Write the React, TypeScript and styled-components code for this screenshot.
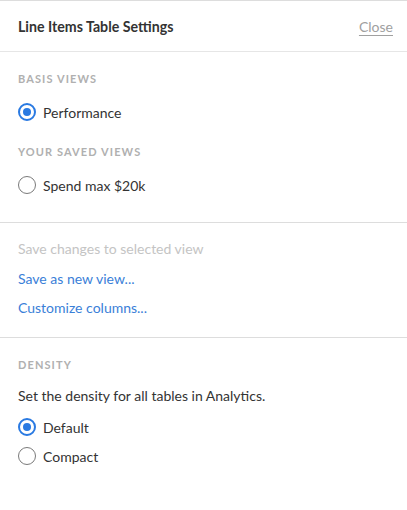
import { createGlobalStyle, styled } from 'styled-components';

const GlobalStyle = createGlobalStyle`
  body {
    margin: 0;
    background: #ffffff;
    font-family: Lato, "Open Sans", sans-serif;
    color: #333333;
  }
`;

interface RadioProps {
  label: string;
  checked?: boolean;
}

const Radio = ({ label, checked }: RadioProps) => (
  <RadioRow>
    <RadioCircle $checked={checked} />
    <span>{label}</span>
  </RadioRow>
);

export default function App() {
  return (
    <>
      <GlobalStyle />
      <Panel>
        <Header>
          <Title>Line Items Table Settings</Title>
          <CloseLink>Close</CloseLink>
        </Header>

        <Section>
          <SectionLabel>Basis Views</SectionLabel>
          <Radio label="Performance" checked />
          <SectionLabel $spaced>Your Saved Views</SectionLabel>
          <Radio label="Spend max $20k" />
        </Section>

        <LinkSection>
          <Action $disabled>Save changes to selected view</Action>
          <Action>Save as new view...</Action>
          <Action>Customize columns...</Action>
        </LinkSection>

        <Section $last>
          <SectionLabel>Density</SectionLabel>
          <Description>Set the density for all tables in Analytics.</Description>
          <RadioList>
            <Radio label="Default" checked />
            <Radio label="Compact" />
          </RadioList>
        </Section>
      </Panel>
    </>
  );
}

const Panel = styled.div`
  width: 407px;
  min-height: 510px;
  box-sizing: border-box;
  border-top: 1px solid #dddddd;
  background: #ffffff;
`;

const Header = styled.div`
  height: 50px;
  display: flex;
  align-items: center;
  justify-content: space-between;
  padding: 0 14px 0 18px;
  border-bottom: 1px solid #e6e6e6;
`;

const Title = styled.h2`
  margin: 0;
  font-size: 14.2px;
  font-weight: 700;
  color: #333333;
`;

const CloseLink = styled.a`
  font-size: 14px;
  color: #a0a0a0;
  text-decoration: underline;
  text-underline-offset: 3px;
  cursor: pointer;
`;

const Section = styled.div<{ $last?: boolean }>`
  padding: 18px 18px ${({ $last }) => ($last ? '0' : '25px')};
  border-bottom: ${({ $last }) => ($last ? 'none' : '1px solid #dddddd')};
  display: flex;
  flex-direction: column;
`;

const SectionLabel = styled.div<{ $spaced?: boolean }>`
  font-size: 11px;
  line-height: 18px;
  font-weight: 700;
  letter-spacing: 1.1px;
  text-transform: uppercase;
  color: #b0b0b0;
  margin-top: ${({ $spaced }) => ($spaced ? '19px' : '0')};
  margin-bottom: 12px;
`;

const RadioRow = styled.label`
  display: flex;
  align-items: center;
  gap: 7px;
  height: 24px;
  font-size: 14px;
  color: #333333;
  cursor: pointer;
`;

const RadioCircle = styled.span<{ $checked?: boolean }>`
  width: 18px;
  height: 18px;
  box-sizing: border-box;
  border-radius: 50%;
  flex-shrink: 0;
  border: ${({ $checked }) =>
    $checked ? '2px solid #2a7ae2' : '1.5px solid #7a7a7a'};
  display: flex;
  align-items: center;
  justify-content: center;
  &::after {
    content: '';
    display: ${({ $checked }) => ($checked ? 'block' : 'none')};
    width: 8px;
    height: 8px;
    border-radius: 50%;
    background: #2a7ae2;
  }
`;

const LinkSection = styled.div`
  padding: 16px 18px 19px;
  border-bottom: 1px solid #dddddd;
  display: flex;
  flex-direction: column;
  gap: 9.5px;
`;

const Action = styled.a<{ $disabled?: boolean }>`
  font-size: 14px;
  line-height: 20px;
  color: ${({ $disabled }) => ($disabled ? '#c4c4c4' : '#3a80d8')};
  cursor: ${({ $disabled }) => ($disabled ? 'default' : 'pointer')};
`;

const Description = styled.p`
  margin: 0 0 9px;
  font-size: 14px;
  line-height: 20px;
  color: #333333;
`;

const RadioList = styled.div`
  display: flex;
  flex-direction: column;
  gap: 5px;
`;
